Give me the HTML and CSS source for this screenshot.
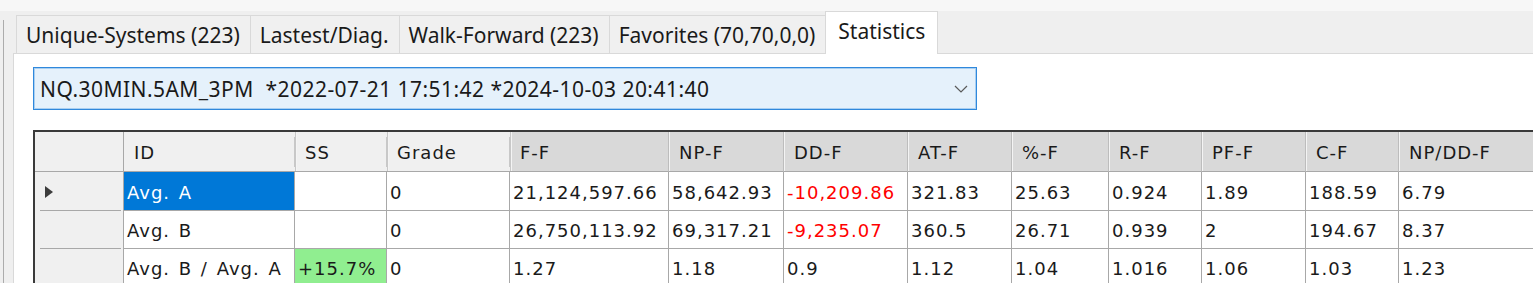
FILE: index.html
```html
<!DOCTYPE html>
<html lang="en">

<head>
  <meta charset="UTF-8">
  <meta name="viewport" content="width=device-width, initial-scale=1.0">

  <title>Statistics</title>
  <link rel="stylesheet" href="styles.css">
</head>

<body>
  <div class="window">
    <div class="gutter"></div>

    <div class="tabctl">
      <div class="tabs">
        <div class="tab">Unique-Systems (223)</div>
        <div class="tab">Lastest/Diag.</div>
        <div class="tab">Walk-Forward (223)</div>
        <div class="tab">Favorites (70,70,0,0)</div>
        <div class="tab active">Statistics</div>
      </div>

      <div class="panel">
        <!-- period selector -->
        <div class="combo">
          <span class="combo-text">NQ.30MIN.5AM_3PM&nbsp; *2022-07-21 17:51:42 *2024-10-03 20:41:40</span>
          <svg class="chevron" width="14" height="8" viewBox="0 0 14 8">
            <polyline points="1,1 7,7 13,1" fill="none" stroke="#5a5a5a" stroke-width="1.2" />
          </svg>
        </div>

        <div class="grid">
          <table>
            <colgroup>
              <col class="c-rh">
              <col class="c-id">
              <col class="c-ss">
              <col class="c-grade">
              <col class="c-ff">
              <col class="c-npf">
              <col class="c-ddf">
              <col class="c-atf">
              <col class="c-pctf">
              <col class="c-rf">
              <col class="c-pff">
              <col class="c-cf">
              <col class="c-npdd">
            </colgroup>
            <thead>
              <tr class="head">
                <th class="rh"></th>
                <th class="plain">ID</th>
                <th class="plain">SS</th>
                <th class="plain">Grade</th>
                <th>F-F</th>
                <th>NP-F</th>
                <th>DD-F</th>
                <th>AT-F</th>
                <th>%-F</th>
                <th>R-F</th>
                <th>PF-F</th>
                <th>C-F</th>
                <th>NP/DD-F</th>
              </tr>
            </thead>
            <tbody>
              <tr class="r1">
                <td class="rh">
                  <svg class="current" width="8" height="12" viewBox="0 0 8 12">
                    <polygon points="0,0 8,6 0,12" fill="#3c3c3c" />
                  </svg>
                </td>
                <td class="selected">Avg. A</td>
                <td></td>
                <td>0</td>
                <td>21,124,597.66</td>
                <td>58,642.93</td>
                <td class="neg">-10,209.86</td>
                <td>321.83</td>
                <td>25.63</td>
                <td>0.924</td>
                <td>1.89</td>
                <td>188.59</td>
                <td>6.79</td>
              </tr>
              <tr class="r2">
                <td class="rh"></td>
                <td>Avg. B</td>
                <td></td>
                <td>0</td>
                <td>26,750,113.92</td>
                <td>69,317.21</td>
                <td class="neg">-9,235.07</td>
                <td>360.5</td>
                <td>26.71</td>
                <td>0.939</td>
                <td>2</td>
                <td>194.67</td>
                <td>8.37</td>
              </tr>
              <tr class="r3">
                <td class="rh"></td>
                <td>Avg. B / Avg. A</td>
                <td class="up">+15.7%</td>
                <td>0</td>
                <td>1.27</td>
                <td>1.18</td>
                <td>0.9</td>
                <td>1.12</td>
                <td>1.04</td>
                <td>1.016</td>
                <td>1.06</td>
                <td>1.03</td>
                <td>1.23</td>
              </tr>
            </tbody>
          </table>
        </div>
      </div>
    </div>
  </div>
</body>

</html>
```

FILE: styles.css
```css
body {
  margin: 0;
  height: 283px;
  overflow: hidden;
  background: linear-gradient(#f7f7f7 0, #f7f7f7 11px, #efefef 11px);
  font-family: "Noto Sans", "Open Sans", sans-serif;
  color: #1a1a1a;
}

.window {
  display: flex;
  height: 283px;
}

.gutter {
  width: 9px;
  margin: 20px 0 0 3px;
  border-left: 1px solid #acacac;
}

.tabctl {
  flex: 1;
  display: flex;
  flex-direction: column;
  min-width: 0;
}

/* tab strip */
.tabs {
  flex-shrink: 0;
  display: flex;
  align-items: flex-end;
  height: 53px;
  padding-left: 3px;
}

.tab {
  height: 38px;
  box-sizing: border-box;
  padding: 0 10px 0 9px;
  display: flex;
  align-items: center;
  background: #f0f0f0;
  border: 1px solid #d9d9d9;
  border-bottom: none;
  margin-right: -1px;
  font-size: 21px;
  white-space: nowrap;
}

.tab.active {
  position: relative;
  height: 43px;
  margin-bottom: -1px;
  padding: 0 12px 5px 12px;
  background: #fff;
}

.panel {
  flex: 1;
  background: #fff;
  border-top: 1px solid #d9d9d9;
  border-left: 1px solid #d9d9d9;
  padding: 13px 0 0 19px;
}

/* combo box */
.combo {
  width: 944px;
  height: 43px;
  box-sizing: border-box;
  display: flex;
  align-items: center;
  justify-content: space-between;
  padding: 0 8px 0 6px;
  background: #e5f1fb;
  border: 1px solid #2f88dc;
  box-shadow: inset 0 0 0 1px #a9cff1;
  margin-bottom: 20px;
}

.combo-text {
  font-size: 21px;
  letter-spacing: 0.45px;
  white-space: nowrap;
}

/* data grid */
.grid {
  border-top: 2px solid #3a3a3a;
  border-left: 2px solid #3a3a3a;
}

table {
  table-layout: fixed;
  border-collapse: separate;
  border-spacing: 0;
  width: 1499px;
  font-family: "DejaVu Sans", sans-serif;
  font-size: 18px;
  letter-spacing: 1px;
  word-spacing: 2px;
}

.c-rh { width: 89px; }
.c-id { width: 171px; }
.c-ss { width: 92px; }
.c-grade { width: 123px; }
.c-ff { width: 159px; }
.c-npf { width: 115px; }
.c-ddf { width: 124px; }
.c-atf { width: 104px; }
.c-pctf { width: 97px; }
.c-rf { width: 93px; }
.c-pff { width: 104px; }
.c-cf { width: 93px; }
.c-npdd { width: 135px; }

th,
td {
  padding: 2px 0 0 3px;
  text-align: left;
  white-space: nowrap;
  overflow: hidden;
  border-right: 1px solid #a8a8a8;
  border-bottom: 1px solid #a8a8a8;
}

th {
  font-weight: normal;
  padding-left: 10px;
  background: #d9d9d9;
  border-right: 1px solid #bdbdbd;
  box-shadow: inset 1px 0 0 #f4f4f4;
}

th.plain {
  background: #f0f0f0 linear-gradient(#c8c8c8, #c8c8c8) right center / 1px 30px no-repeat;
  border-right: none;
  box-shadow: none;
}

th.plain + th {
  box-shadow: inset 1px 0 0 #c8c8c8, inset 2px 0 0 #f4f4f4;
}

th.rh {
  background: #f0f0f0;
  border-right: 1px solid #a8a8a8;
  box-shadow: none;
}

tr.head { height: 40px; }
tr.r1 { height: 39px; }
tr.r2 { height: 38px; }
tr.r3 { height: 38px; }

td.rh {
  padding: 0 0 0 10px;
  border-bottom: none;
  background: #f0f0f0 linear-gradient(#a8a8a8, #a8a8a8) left 5px bottom 0 / 81px 1px no-repeat;
}

.current {
  display: block;
}

td.selected {
  background: #0078d7;
  color: #fff;
}

td.neg {
  color: #ff0000;
}

td.up {
  background: #90ee90;
}
```
